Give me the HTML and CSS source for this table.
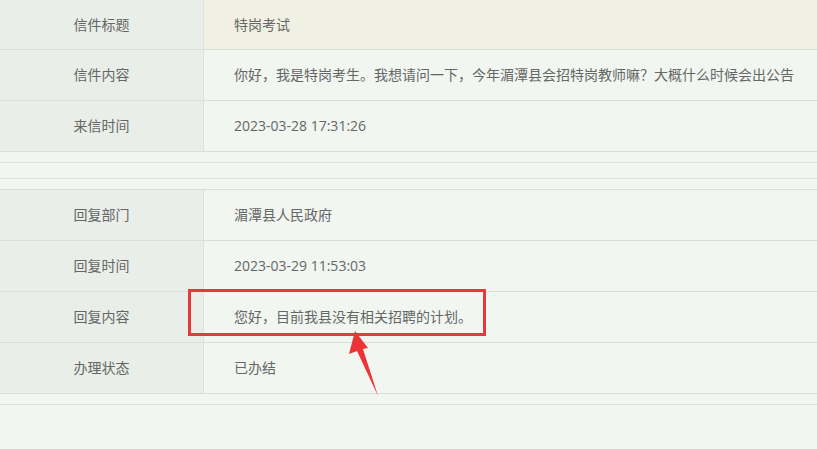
FILE: index.html
```html
<!DOCTYPE html>
<html lang="zh-CN">
<head>
<meta charset="utf-8">
<title>信件详情</title>
<link rel="stylesheet" href="styles.css">
</head>
<body>
<div class="page">
  <div class="table">
    <div class="row row-first">
      <div class="label">信件标题</div>
      <div class="value value-title">特岗考试</div>
    </div>
    <div class="row">
      <div class="label">信件内容</div>
      <div class="value">你好，我是特岗考生。我想请问一下，今年湄潭县会招特岗教师嘛？大概什么时候会出公告</div>
    </div>
    <div class="row">
      <div class="label">来信时间</div>
      <div class="value">2023-03-28 17:31:26</div>
    </div>
  </div>
  <div class="gap gap-a"></div>
  <div class="gap gap-b"></div>
  <div class="table table-second">
    <div class="row row-top">
      <div class="label">回复部门</div>
      <div class="value">湄潭县人民政府</div>
    </div>
    <div class="row">
      <div class="label">回复时间</div>
      <div class="value">2023-03-29 11:53:03</div>
    </div>
    <div class="row">
      <div class="label">回复内容</div>
      <div class="value">您好，目前我县没有相关招聘的计划。</div>
    </div>
    <div class="row">
      <div class="label">办理状态</div>
      <div class="value">已办结</div>
    </div>
  </div>
  <div class="gap gap-a"></div>

  <div class="highlight"></div>
  <svg class="arrow" width="817" height="449" viewBox="0 0 817 449" aria-hidden="true">
    <polygon points="355,331 368,348 363,349 378,396 357,351 349,354" fill="#ee3338"/>
  </svg>
</div>
</body>
</html>
```

FILE: styles.css
```css
html, body {
  margin: 0;
  padding: 0;
  background: #f1f6f1;
}

body {
  font-family: "Open Sans", "Noto Sans CJK SC", "Noto Sans", sans-serif;
  font-size: 14px;
  color: #666666;
}

.page {
  position: relative;
  width: 817px;
  height: 449px;
  overflow: hidden;
}

.table {
  display: flex;
  flex-direction: column;
}

.table-second {
  margin-top: 10px;
}

.row {
  display: flex;
  height: 50px;
  border-bottom: 1px solid #d9ded9;
}

.row-first {
  height: 49px;
}

.row-top {
  border-top: 1px solid #d9ded9;
}

.label {
  width: 203px;
  flex: none;
  display: flex;
  align-items: center;
  justify-content: center;
  padding-bottom: 2px;
  background: #e9eee9;
  border-right: 1px solid #dde2dd;
}

.value {
  flex: 1;
  display: flex;
  align-items: center;
  padding-left: 30px;
  padding-bottom: 2px;
  background: #f1f6f1;
  white-space: nowrap;
}

.value-title {
  background: #f0f1e2;
}

.gap {
  border-bottom: 1px solid #dce2dc;
}

.gap-a {
  height: 10px;
}

.gap-b {
  height: 15px;
}

.highlight {
  position: absolute;
  left: 188px;
  top: 289px;
  width: 292px;
  height: 41px;
  border: 3px solid #e8383c;
}

.arrow {
  position: absolute;
  left: 0;
  top: 0;
  pointer-events: none;
}
```
